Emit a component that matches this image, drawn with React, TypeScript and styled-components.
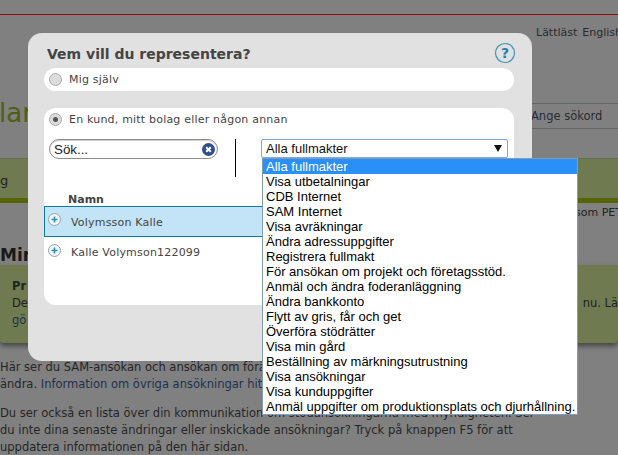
import React from "react";
import styled, { createGlobalStyle } from "styled-components";

const Global = createGlobalStyle`
  html, body { margin: 0; padding: 0; background: #808080; }
  * { box-sizing: border-box; }
`;

const Page = styled.div`
  position: relative;
  width: 618px;
  height: 455px;
  overflow: hidden;
  background: #808080;
  color: #222;
  font: 12px/17px "DejaVu Sans", Verdana, sans-serif;
`;
const RedLine = styled.div`
  margin-top: 14px;
  height: 1px;
  background: #8f0a0a;
`;
const TopLinks = styled.div`
  display: flex;
  gap: 5px;
  padding: 10px 0 0 536px;
  height: 88px;
  font-size: 11px;
  line-height: 16px;
  color: #2a2a2a;
  white-space: nowrap;
`;
const SearchRow = styled.div`
  display: flex;
  justify-content: space-between;
  height: 26px;
`;
const PageTitle = styled.div`
  margin-left: -1px;
  font-size: 26px;
  line-height: 20px;
  color: #4f5e10;
`;
const SearchField = styled.div`
  width: 87px;
  padding: 4px 0 0 0;
  border-top: 1px solid #666;
  border-bottom: 1px solid #666;
  font-size: 11.5px;
  line-height: 16px;
  color: #2b2b33;
`;
const GreenBand = styled.div`
  margin-top: 29px;
  height: 45px;
  padding-top: 13px;
  background: #6f7a50;
  border-top: 1px solid #66704a;
  border-bottom: 5px solid #566500;
  font-size: 13px;
  color: #222;
`;
const Note = styled.div`
  padding: 2px 0 0 575px;
  height: 41px;
  font-size: 11px;
  line-height: 15px;
  white-space: nowrap;
  color: #222;
`;
const Heading = styled.h2`
  margin: 0;
  height: 21px;
  font: bold 17px/22px "DejaVu Sans", sans-serif;
  color: #1a1a1a;
`;
const Notice = styled.div`
  height: 78px;
  padding: 13px 0 0 12px;
  background: #6f7a50;
  border-radius: 0 0 4px 4px;
  box-shadow: 0 3px 5px #444;
  font-size: 11.5px;
  line-height: 17px;
  color: #222;
  white-space: nowrap;
`;
const NoticeTitle = styled.div`
  font-weight: bold;
`;
const NoticeLine = styled.div`
  display: flex;
  justify-content: space-between;
`;
const Link = styled.span`
  color: #1d3050;
`;
const Paragraph = styled.p`
  margin: 16px 0 0;
  width: 640px;
  font-size: 11.5px;
  line-height: 17px;
  color: #262626;
  white-space: pre-line;
  & + & {
    margin-top: 12px;
  }
`;

const Modal = styled.div`
  position: absolute;
  left: 28px;
  top: 33px;
  width: 504px;
  height: 328px;
  padding: 13px 18px 0 16px;
  background: #e1e1e1;
  border-radius: 14px;
  display: flex;
  flex-direction: column;
`;
const ModalHead = styled.div`
  display: flex;
  justify-content: space-between;
  align-items: flex-start;
  height: 22px;
  padding: 0 0 0 3px;
`;
const ModalTitle = styled.h1`
  margin: 0;
  font: bold 14px/17px "DejaVu Sans", sans-serif;
  color: #444;
`;
const HelpIcon = styled.svg`
  width: 22px;
  height: 22px;
  margin: -4px -2px 0 0;
`;
const Panel = styled.div<{ $h: number }>`
  position: relative;
  height: ${(p) => p.$h}px;
  background: #fff;
  border-radius: 12px;
`;
const Spacer = styled.div`
  height: 17px;
`;
const RadioRow = styled.label`
  display: flex;
  align-items: center;
  gap: 7px;
  height: 23px;
  padding-left: 5px;
  font-size: 11px;
  letter-spacing: 0.2px;
  color: #444;
`;
const Radio = styled.span<{ $on?: boolean }>`
  display: flex;
  align-items: center;
  justify-content: center;
  width: 13px;
  height: 13px;
  border-radius: 50%;
  border: 1px solid #a8a8a8;
  background: #dcdcdc;
  &::after {
    content: "";
    width: 5px;
    height: 5px;
    border-radius: 50%;
    background: ${(p) => (p.$on ? "#555" : "transparent")};
  }
`;
const Filters = styled.div`
  display: flex;
  align-items: flex-start;
  height: 58px;
  padding: 8px 0 0 5px;
`;
const SearchBox = styled.div`
  display: flex;
  align-items: center;
  justify-content: space-between;
  width: 169px;
  height: 20px;
  padding: 0 2px 0 4px;
  border: 1px solid #8c8c8c;
  border-radius: 10px;
  box-shadow: inset 0 1px 1px #ccc;
  font: 13.33px "Liberation Sans", Arial, sans-serif;
  color: #222;
`;
const ClearIcon = styled.svg`
  width: 13px;
  height: 13px;
`;
const Divider = styled.div`
  width: 1px;
  height: 38px;
  margin: 0 25px 0 17px;
  background: #000;
`;
const SelectWrap = styled.div`
  position: relative;
  width: 247px;
`;
const SelectBox = styled.div`
  display: flex;
  align-items: center;
  justify-content: space-between;
  height: 19px;
  padding: 0 5px 0 4px;
  border: 1px solid #7ea6e0;
  border-radius: 2px;
  background: #fff;
  font: 13px "Liberation Sans", Arial, sans-serif;
  color: #111;
`;
const Arrow = styled.svg`
  width: 8px;
  height: 7px;
`;
const Menu = styled.ul`
  position: absolute;
  left: 1px;
  top: 19px;
  width: 316px;
  margin: 0;
  padding: 0;
  list-style: none;
  background: #fff;
  border: 1px solid #7f9db9;
  font: 13px/15px "Liberation Sans", Arial, sans-serif;
  color: #000;
  z-index: 2;
`;
const MenuItem = styled.li<{ $on?: boolean }>`
  height: 15px;
  padding-left: 3px;
  white-space: nowrap;
  background: ${(p) => (p.$on ? "#2a8ff7" : "transparent")};
  color: ${(p) => (p.$on ? "#fff" : "#000")};
`;
const TableHead = styled.div`
  height: 17px;
  padding: 2px 0 0 24px;
  font: bold 11px/17px "DejaVu Sans", sans-serif;
  color: #444;
`;
const Row = styled.div<{ $on?: boolean }>`
  display: flex;
  align-items: center;
  height: ${(p) => (p.$on ? 31 : 30)}px;
  padding: 0 0 0 3px;
  gap: 10px;
  background: ${(p) => (p.$on ? "#c2e4f6" : "transparent")};
  border: ${(p) => (p.$on ? "1px solid #0c7aa6" : "1px solid transparent")};
  font-size: 11px;
  letter-spacing: 0.2px;
  color: #444;
`;
const RowLabel = styled.span`
  padding-top: 1px;
`;
const PlusIcon = styled.svg`
  width: 13px;
  height: 13px;
  flex: none;
  margin-top: -4px;
`;

const items = [
  "Alla fullmakter",
  "Visa utbetalningar",
  "CDB Internet",
  "SAM Internet",
  "Visa avräkningar",
  "Ändra adressuppgifter",
  "Registrera fullmakt",
  "För ansökan om projekt och företagsstöd.",
  "Anmäl och ändra foderanläggning",
  "Ändra bankkonto",
  "Flytt av gris, får och get",
  "Överföra stödrätter",
  "Visa min gård",
  "Beställning av märkningsutrustning",
  "Visa ansökningar",
  "Visa kunduppgifter",
  "Anmäl uppgifter om produktionsplats och djurhållning.",
];

const Plus = () => (
  <PlusIcon viewBox="0 0 13 13">
    <circle cx="6.5" cy="6.5" r="6" fill="#f2f6f8" stroke="#8fa3ad" />
    <path d="M3.5 6.5h6M6.5 3.5v6" stroke="#2a8fb8" strokeWidth="1.6" />
  </PlusIcon>
);

export default function App() {
  return (
    <Page>
      <Global />
      <RedLine />
      <TopLinks>
        <span>Lättläst</span>
        <span>English</span>
      </TopLinks>
      <SearchRow>
        <PageTitle>lar</PageTitle>
        <SearchField>Ange sökord</SearchField>
      </SearchRow>
      <GreenBand>g</GreenBand>
      <Note>som PET</Note>
      <Heading>Min</Heading>
      <Notice>
        <NoticeTitle>Pr</NoticeTitle>
        <NoticeLine>
          <span>De</span>
          <span>nu. Lä</span>
        </NoticeLine>
        <Link>gö</Link>
      </Notice>
      <Paragraph>
        Här ser du SAM-ansökan och ansökan om förändrade uppgifter
        {"\n"}ändra. <Link>Information om övriga ansökningar hittar du här</Link>
      </Paragraph>
      <Paragraph>
        {"Du ser också en lista över din kommunikation om stödansökningarna med myndigheten. Ser\ndu inte dina senaste ändringar eller inskickade ansökningar? Tryck på knappen F5 för att\nuppdatera informationen på den här sidan."}
      </Paragraph>

      <Modal>
        <ModalHead>
          <ModalTitle>Vem vill du representera?</ModalTitle>
          <HelpIcon viewBox="0 0 22 22">
            <circle cx="11" cy="11" r="9.5" fill="none" stroke="#3f93b8" strokeWidth="1.2" />
            <text x="11" y="16" textAnchor="middle" fontFamily="DejaVu Sans" fontWeight="bold" fontSize="14" fill="#1f7fae">?</text>
          </HelpIcon>
        </ModalHead>
        <Panel $h={23}>
          <RadioRow>
            <Radio />
            Mig själv
          </RadioRow>
        </Panel>
        <Spacer />
        <Panel $h={197}>
          <RadioRow>
            <Radio $on />
            En kund, mitt bolag eller någon annan
          </RadioRow>
          <Filters>
            <SearchBox>
              Sök...
              <ClearIcon viewBox="0 0 13 13">
                <circle cx="6.5" cy="6.5" r="6.5" fill="#2f4d8f" />
                <path d="M4.2 4.2l4.6 4.6M8.8 4.2l-4.6 4.6" stroke="#fff" strokeWidth="2" />
              </ClearIcon>
            </SearchBox>
            <Divider />
            <SelectWrap>
              <SelectBox>
                Alla fullmakter
                <Arrow viewBox="0 0 8 7">
                  <path d="M0 0h8L4 7z" fill="#111" />
                </Arrow>
              </SelectBox>
              <Menu>
                {items.map((t, i) => (
                  <MenuItem key={t} $on={i === 0}>
                    {t}
                  </MenuItem>
                ))}
              </Menu>
            </SelectWrap>
          </Filters>
          <TableHead>Namn</TableHead>
          <Row $on>
            <Plus />
            <RowLabel>Volymsson Kalle</RowLabel>
          </Row>
          <Row>
            <Plus />
            <RowLabel>Kalle Volymson122099</RowLabel>
          </Row>
        </Panel>
      </Modal>
    </Page>
  );
}
